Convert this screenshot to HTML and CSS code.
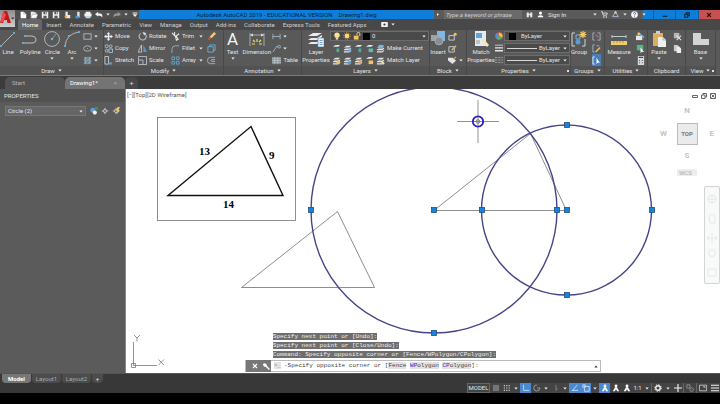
FILE: index.html
```html
<!DOCTYPE html>
<html lang="en">

<head>
    <meta charset="UTF-8">
    <meta name="viewport" content="width=device-width, initial-scale=1.0">
    <title>Autodesk AutoCAD 2019 - Drawing1.dwg</title>
    <link rel="stylesheet" href="styles.css">
</head>

<body>
    <!-- shared icons -->
    <svg class="defs" aria-hidden="true">
        <symbol id="caret" viewBox="0 0 6 4"><path d="M0.5 0.5h5L3 3.6z" fill="#f0f0f0"/></symbol>
        <symbol id="page" viewBox="0 0 10 10"><path d="M2 1h4l3 3v5H2z" fill="#fff"/><path d="M6 1v3h3" fill="none" stroke="#999" stroke-width=".7"/></symbol>
        <symbol id="folder" viewBox="0 0 10 10"><path d="M1 9V1h4l1 1h2v2" fill="#eee"/><path d="M1 9l2-5h7L8 9z" fill="#fff" stroke="#777" stroke-width=".5"/></symbol>
        <symbol id="save" viewBox="0 0 10 10"><path d="M1 1h8v8H1z" fill="#eee"/><path d="M3 1h4v3H3zM3 6h4v3H3z" fill="#555"/><path d="M5 1.5h1v2H5z" fill="#fff"/></symbol>
        <symbol id="layer" viewBox="0 0 10 10"><path d="M1 4l3-2h5L7 4zM1 6l2-1h4l2-1v1L7 7H1zM1 8h6l2-2v1.5L7 9.500H1z" fill="#e4e8ea"/></symbol>
        <symbol id="pick" viewBox="0 0 10 10"><path d="M5 1v8M1 5h8" stroke="#ddd"/><rect x="3.500" y="3.500" width="3" height="3" fill="#666" stroke="#eee" stroke-width=".7"/></symbol>
        <symbol id="person" viewBox="0 0 10 10"><circle cx="5" cy="2.500" r="1.800" fill="#fff"/><path d="M3.800 4h2.400L9 9H6.500L5 6.500 3.500 9H1z" fill="#fff"/></symbol>
    </svg>

    <header class="titlebar">
        <button class="app-button" aria-label="Application menu">
            <svg viewBox="0 0 15 17"><path d="M0 13L3.500 1h3.500l4 12H7.500L6.800 10H4L3 13z" fill="#c4151c"/><path d="M3.500 1L0 13l3-1 3-7z" fill="#f04a4a"/><path d="M11 7.500h3.500l-1.700 2z" fill="#333"/></svg>
        </button>
        <div class="title-row">
            <div class="quick-access">
                <button aria-label="New"><svg><use href="#page"/></svg></button>
                <button aria-label="Open"><svg><use href="#folder"/></svg></button>
                <button aria-label="Save"><svg><use href="#save"/></svg></button>
                <button aria-label="Save as"><svg><use href="#save"/></svg></button>
                <button aria-label="Open from web"><svg viewBox="0 0 10 10"><path d="M3 1h3v4h3v4H3z" fill="#e6e6e6"/><path d="M2 6h3v2H2z" fill="#e7a53a"/></svg></button>
                <button aria-label="Save to web"><svg viewBox="0 0 10 10"><path d="M4 1h3v7H4z" fill="#e6e6e6"/><path d="M2 6h4v3H2z" fill="#4a9be0"/></svg></button>
                <button aria-label="Plot"><svg viewBox="0 0 10 10"><path d="M2 1h6v2h1.500v4H.5V3H2z" fill="#f2f2f2"/><path d="M2 6h6v3H2z" fill="#bcd9ee"/></svg></button>
                <button aria-label="Undo"><svg viewBox="0 0 10 10"><path d="M0 4l4-3v2h3q3 1 2 5-1-2.500-5-2.500V7z" fill="#f2f2f2"/></svg></button>
                <button class="slim" aria-label="Undo list"><svg><use href="#caret"/></svg></button>
                <button aria-label="Redo"><svg viewBox="0 0 10 10"><path d="M10 4L6 1v2H3Q0 4 1 8q1-2.500 5-2.500V7z" fill="#999"/></svg></button>
                <button class="slim" aria-label="Redo list"><svg><use href="#caret"/></svg></button>
                <button aria-label="Customize"><svg viewBox="0 0 10 10"><path d="M2 2h6v1H2zM2 4h6L5 7.500z" fill="#f2f2f2"/></svg></button>
            </div>
            <div class="window-title"><span>Autodesk AutoCAD 2019 - EDUCATIONAL VERSION</span><span>Drawing1.dwg</span></div>
            <div class="info-center">
                <button class="slim" aria-label="Expand search"><svg viewBox="0 0 4 6"><path d="M0 0l4 3-4 3z" fill="#eee"/></svg></button>
                <input type="search" placeholder="Type a keyword or phrase" aria-label="Type a keyword or phrase">
                <button aria-label="Search"><svg viewBox="0 0 10 10"><path d="M1 2h3v2h2V2h3v7H6V6H4v3H1z" fill="#e8e8e8"/></svg></button>
                <button class="sign-in"><svg viewBox="0 0 10 10"><circle cx="5" cy="3" r="2.200" fill="#fff"/><path d="M1 9q0-3 4-3t4 3z" fill="#fff"/></svg>Sign In</button>
                <button class="slim" aria-label="Account list"><svg><use href="#caret"/></svg></button>
                <button aria-label="App store"><svg viewBox="0 0 10 10"><path d="M0 1h2l1 5h5l1-3H3" fill="none" stroke="#e8e8e8" stroke-width="1.200"/><circle cx="4" cy="8.500" r="1" fill="#fff"/><circle cx="7.500" cy="8.500" r="1" fill="#fff"/></svg></button>
                <button aria-label="Stay connected"><svg viewBox="0 0 10 10"><path d="M5 1L1 8h8z" fill="none" stroke="#aebdd8" stroke-width="1.300"/><circle cx="5" cy="2" r="1.500" fill="#ddd"/></svg></button>
                <button class="slim" aria-label="Connect list"><svg><use href="#caret"/></svg></button>
                <button aria-label="Help"><svg viewBox="0 0 10 10"><circle cx="5" cy="5" r="4.800" fill="#f6f6f6"/><path d="M3.500 3.700q.2-1.500 1.600-1.500 1.500 0 1.500 1.300Q6.600 4.500 5 5.400v.8M5 7.200v1" fill="none" stroke="#2452a8" stroke-width="1.200"/></svg></button>
                <button class="slim" aria-label="Help list"><svg><use href="#caret"/></svg></button>
            </div>
            <div class="window-buttons">
                <button aria-label="Minimize"><svg viewBox="0 0 8 8"><path d="M1 5h6v1.500H1z" fill="#102030"/></svg></button>
                <button aria-label="Restore"><svg viewBox="0 0 8 8"><path d="M3 3V1h4v4H5M1 3h4v4H1z" fill="none" stroke="#102030" stroke-width="1.400"/></svg></button>
                <button class="close" aria-label="Close"><svg viewBox="0 0 8 8"><path d="M1.500 1.500l5 5m0-5l-5 5" stroke="#200a0a" stroke-width="1.600"/></svg></button>
            </div>
        </div>
        <nav class="ribbon-tabs">
            <a class="active" href="#home">Home</a>
            <a href="#insert">Insert</a>
            <a href="#annotate">Annotate</a>
            <a href="#parametric">Parametric</a>
            <a href="#view">View</a>
            <a href="#manage">Manage</a>
            <a href="#output">Output</a>
            <a href="#addins">Add-ins</a>
            <a href="#collaborate">Collaborate</a>
            <a href="#express">Express Tools</a>
            <a href="#featured">Featured Apps</a>
            <button class="ribbon-toggle" aria-label="Minimize ribbon"><svg class="cam" viewBox="0 0 8 6"><rect width="8" height="6" rx="1" fill="#f2f2f2"/><circle cx="4" cy="3" r="1.300" fill="#333"/></svg><svg class="caret"><use href="#caret"/></svg></button>
        </nav>
    </header>

    <section class="ribbon" id="home">
        <div class="panel">
            <div class="tools draw">
                <div class="bigs">
                    <button class="big"><svg viewBox="0 0 16 16"><path d="M1 15L14 2" stroke="#c8ccce" stroke-width=".8"/><path d="M0 14h2v2H0zM13 1h2v2h-2z" fill="#6fa6cc"/></svg>Line</button>
                    <button class="big"><svg viewBox="0 0 16 16"><path d="M1 12h10q4-1 3-4-1-3-4-3H3" fill="none" stroke="#c8ccce" stroke-width=".9"/><path d="M0 11h2v2H0zM2 4h2v2H2z" fill="#6fa6cc"/></svg>Polyline</button>
                    <button class="big"><svg viewBox="0 0 16 16"><circle cx="8" cy="8" r="7.400" fill="none" stroke="#c8ccce" stroke-width=".8"/><path d="M8 8l4-5" stroke="#74b6d8" stroke-width=".8"/><circle cx="8" cy="8" r="1.200" fill="#74b6d8"/></svg>Circle<svg class="caret"><use href="#caret"/></svg></button>
                    <button class="big"><svg viewBox="0 0 16 16"><path d="M1 15Q2 3 15 1" fill="none" stroke="#c8ccce" stroke-width=".8"/><path d="M0 14h2v2H0zM4 4h2v2H4zM14 0h2v2h-2z" fill="#6fa6cc"/></svg>Arc<svg class="caret"><use href="#caret"/></svg></button>
                </div>
                <div class="rows">
                    <button class="tool" aria-label="Rectangle"><svg viewBox="0 0 10 10"><rect x="1" y="2" width="8" height="6" fill="none" stroke="#aebcc4"/></svg><svg class="caret"><use href="#caret"/></svg></button>
                    <button class="tool" aria-label="Ellipse"><svg viewBox="0 0 10 10"><ellipse cx="5" cy="5" rx="4.300" ry="3" fill="none" stroke="#aebcc4"/><path d="M4.500 4.500h1v1h-1z" fill="#74b6d8"/></svg><svg class="caret"><use href="#caret"/></svg></button>
                    <button class="tool" aria-label="Hatch"><svg viewBox="0 0 10 10"><path d="M1 1h8v8H1z" fill="#71838e"/><path d="M1 5l4-4M1 9l8-8M5 9l4-4M3 1v8M7 1v8" stroke="#a8c0cc" stroke-width=".6"/></svg><svg class="caret"><use href="#caret"/></svg></button>
                </div>
            </div>
            <button class="panel-title">Draw<svg class="caret"><use href="#caret"/></svg></button>
        </div>

        <div class="panel">
            <div class="tools modify">
                <button class="tool"><svg viewBox="0 0 10 10"><path d="M5 0l2 2.500H5.700v1.800H7.500V3L10 5 7.500 7V5.700H5.700v1.800H7L5 10 3 7.500h1.300V5.700H2.500V7L0 5l2.500-2v1.300h1.800V2.500H3z" fill="#e8ecee"/></svg>Move</button>
                <button class="tool"><svg viewBox="0 0 10 10"><path d="M3 1.500A4 4 0 1 0 8 2" fill="none" stroke="#b4c4cc" stroke-width="1.200"/><path d="M5 0l4 1-2 3z" fill="#dde6ea"/></svg>Rotate</button>
                <button class="tool"><svg viewBox="0 0 10 10"><path d="M1 1l4 4M4 0v4M5 5l4-3M5 5l1 4 2-1-2-3" fill="none" stroke="#e6e6e6" stroke-width="1.200"/></svg>Trim<svg class="caret"><use href="#caret"/></svg></button>
                <button class="tool" aria-label="Erase"><svg viewBox="0 0 10 10"><path d="M1 8l2-3 2 2-3 2z" fill="#d8503c"/><path d="M3 5l5-5 2 2-5 5z" fill="#f0c878"/></svg></button>
                <button class="tool"><svg viewBox="0 0 10 10"><g fill="none" stroke="#a8c4d4"><circle cx="3" cy="2.500" r="1.700"/><circle cx="7.500" cy="2.500" r="1.500"/><circle cx="3" cy="7.500" r="1.500"/><path d="M5.500 5.500h4v4h-4z"/></g></svg>Copy</button>
                <button class="tool"><svg viewBox="0 0 10 10"><path d="M4 1v8H0z" fill="none" stroke="#cfd6da" stroke-width=".9"/><path d="M6 1v8h4z" fill="#5c96c4"/></svg>Mirror</button>
                <button class="tool"><svg viewBox="0 0 10 10"><path d="M1 10V6q0-4 4-4h4" fill="none" stroke="#9fb0b8"/></svg>Fillet<svg class="caret"><use href="#caret"/></svg></button>
                <button class="tool" aria-label="Explode"><svg viewBox="0 0 10 10"><path d="M1 3h6v6H1zM3 3V1h6v6H7" fill="none" stroke="#72aed2"/></svg></button>
                <button class="tool"><svg viewBox="0 0 10 10"><path d="M1 .5h4V9H1z" fill="none" stroke="#c4ccd0"/><path d="M5 7h4v2.500H5z" fill="#5f9ac6"/></svg>Stretch</button>
                <button class="tool"><svg viewBox="0 0 10 10"><path d="M.5.5h9v9h-9zM.5 4.500h5v5" fill="none" stroke="#b8c4ca"/></svg>Scale</button>
                <button class="tool"><svg viewBox="0 0 10 10"><g fill="none" stroke="#5fa6d2"><path d="M1 1h3v3H1zM6 1h3v3H6zM1 6h3v3H1zM6 6h3v3H6z"/></g></svg>Array<svg class="caret"><use href="#caret"/></svg></button>
                <button class="tool" aria-label="Offset"><svg viewBox="0 0 10 10"><path d="M9 1.500H4a3 3 0 0 0 0 7h5M9 4H5.500a1 1 0 0 0 0 2H9" fill="none" stroke="#a4b8c2"/></svg></button>
            </div>
            <button class="panel-title">Modify<svg class="caret"><use href="#caret"/></svg></button>
        </div>

        <div class="panel">
            <div class="tools">
                <button class="big text-big"><span class="glyph">A</span>Text<svg class="caret"><use href="#caret"/></svg></button>
                <button class="big"><svg viewBox="0 0 16 16"><path d="M1 2v13M15 2v13M1 4h14" fill="none" stroke="#b9c0c4" stroke-width=".8"/><path d="M1 4l3-1.500v3zM15 4l-3-1.500v3z" fill="#ddd"/><path d="M8 8v3M4 9l2 2M12 9l-2 2M3 13h3M13 13h-3" stroke="#f0dc50" stroke-width="1.200"/></svg>Dimension</button>
                <div class="rows">
                    <button class="tool" aria-label="Linear"><svg viewBox="0 0 10 10"><path d="M1 2v6M9 2v6M1 5h8" stroke="#9fb6c4"/></svg><svg class="caret"><use href="#caret"/></svg></button>
                    <button class="tool" aria-label="Leader"><svg viewBox="0 0 10 10"><path d="M1 9l4-6h2" fill="none" stroke="#9fb6c4"/><circle cx="8" cy="3" r="1.500" fill="none" stroke="#9fb6c4"/></svg><svg class="caret"><use href="#caret"/></svg></button>
                    <button class="tool"><svg viewBox="0 0 10 10"><path d="M0 1h10v8H0z" fill="#7d8b93"/><path d="M0 3h10M0 5h10M0 7h10M3 1v8M6.500 1v8" stroke="#d4dadd" stroke-width=".6"/></svg>Table</button>
                </div>
            </div>
            <button class="panel-title">Annotation<svg class="caret"><use href="#caret"/></svg></button>
        </div>

        <div class="panel">
            <div class="tools wide-tools">
                <button class="big layer-big"><svg viewBox="0 0 16 16"><path d="M0 5l5-3h9l-5 3zM0 9l3-2h6l5-3v2L9 9zM0 13l3-2h6l5-3v2l-5 3z" fill="#e8ecee"/><path d="M10 7h6v9h-6z" fill="#f4f6f8" stroke="#5a8fc0" stroke-width=".7"/><path d="M11.500 9.500h3M11.500 11.500h3M11.500 13.500h3" stroke="#4a84bc" stroke-width=".8"/></svg>Layer Properties</button>
                <div class="rows layer-rows">
                    <label class="combo layer-combo">
                        <svg viewBox="0 0 10 10"><circle cx="5" cy="4" r="3.300" fill="#fbe38a"/><path d="M3.500 7h3v2.500h-3z" fill="#ddd"/></svg>
                        <svg viewBox="0 0 10 10"><circle cx="5" cy="5" r="3" fill="#fbd86a"/><circle cx="5" cy="5" r="4.200" fill="none" stroke="#eec860" stroke-dasharray="1 1.600"/></svg>
                        <svg viewBox="0 0 10 10"><path d="M1 4.500h6v5H1z" fill="#f2c45c"/><path d="M5 4V2q0-1.500 1.800-1.500T8.500 2v3" fill="none" stroke="#f2d898" stroke-width="1.200"/></svg>
                        <span class="swatch"></span>
                        <select aria-label="Layer"><option>0</option></select>
                        <svg class="caret"><use href="#caret"/></svg>
                    </label>
                    <div class="icon-row">
                        <button class="tool" aria-label="Layer off"><svg viewBox="0 0 10 10"><path d="M1 3l3-2h5L7 3z" fill="#e4e8ea"/><path d="M5 5h3v4H5z" fill="#48b0a0"/></svg></button>
                        <button class="tool" aria-label="Isolate"><svg viewBox="0 0 10 10"><use href="#layer"/><path d="M6 5h3v4H6z" fill="#7cb4e0"/></svg></button>
                        <button class="tool" aria-label="Freeze"><svg viewBox="0 0 10 10"><path d="M1 3l3-2h5L7 3z" fill="#e4e8ea"/><path d="M5 5h3v4H5z" fill="#48b0a0"/></svg></button>
                        <button class="tool" aria-label="Lock"><svg viewBox="0 0 10 10"><path d="M1 3l3-2h5L7 3z" fill="#e4e8ea"/><path d="M4 5h5v4H4z" fill="#58c0a8"/></svg></button>
                        <button class="tool"><svg viewBox="0 0 10 10"><use href="#layer"/><path d="M3 1h5v3H3z" fill="#74b8e4"/></svg>Make Current</button>
                    </div>
                    <div class="icon-row">
                        <button class="tool" aria-label="Turn all on"><svg viewBox="0 0 10 10"><use href="#layer"/><circle cx="7" cy="7" r="2" fill="#f2c85c"/></svg></button>
                        <button class="tool" aria-label="Unisolate"><svg viewBox="0 0 10 10"><use href="#layer"/><path d="M5 6h4v3H5z" fill="#5a9cd8"/></svg></button>
                        <button class="tool" aria-label="Thaw all"><svg viewBox="0 0 10 10"><use href="#layer"/><circle cx="7" cy="7" r="2" fill="#f0a850"/></svg></button>
                        <button class="tool" aria-label="Unlock"><svg viewBox="0 0 10 10"><path d="M1 3l3-2h5L7 3z" fill="#e4e8ea"/><path d="M4 5h5v4H4z" fill="#f2c45c"/></svg></button>
                        <button class="tool"><svg viewBox="0 0 10 10"><use href="#layer"/><path d="M6 6l3 3" stroke="#f2dc8c" stroke-width="2"/></svg>Match Layer</button>
                    </div>
                </div>
            </div>
            <button class="panel-title">Layers<svg class="caret"><use href="#caret"/></svg></button>
        </div>

        <div class="panel">
            <div class="tools">
                <button class="big"><svg viewBox="0 0 16 16"><path d="M7 0h8v10H7z" fill="#7fb8e6"/><path d="M1 4h8v6H1z" fill="#9aa4aa"/><circle cx="9" cy="10" r="4" fill="#868e94" stroke="#b8c0c4" stroke-width=".6"/></svg>Insert</button>
                <div class="rows">
                    <button class="tool" aria-label="Create block"><svg viewBox="0 0 10 10"><path d="M1 4h6v5H1z" fill="none" stroke="#ccd4d8"/><circle cx="8" cy="2.500" r="1.700" fill="#f2c45c"/></svg></button>
                    <button class="tool" aria-label="Edit block"><svg viewBox="0 0 10 10"><path d="M1 3h6v6H1z" fill="none" stroke="#ccd4d8"/><path d="M4 7l5-5" stroke="#e8b860" stroke-width="1.400"/></svg></button>
                    <button class="tool" aria-label="Edit attributes"><svg viewBox="0 0 10 10"><path d="M0 2h5l4 3-4 4-5-4z" fill="#e0e4e6"/><path d="M6 3l3-2" stroke="#ee9a50" stroke-width="1.400"/></svg><svg class="caret"><use href="#caret"/></svg></button>
                </div>
            </div>
            <button class="panel-title">Block<svg class="caret"><use href="#caret"/></svg></button>
        </div>

        <div class="panel">
            <div class="tools wide-tools">
                <button class="big match-big"><svg viewBox="0 0 16 16"><path d="M2 0h11v15H2z" fill="#e4eaee"/><path d="M3 2h6v5H3z" fill="#5ca4dc"/><path d="M3 9h4v4H3z" fill="#b8c4cc"/><path d="M8 9l3-1 5 6-2 2z" fill="#f4e4bc"/></svg>Match Properties</button>
                <div class="rows property-rows">
                    <label class="property"><svg viewBox="0 0 10 10"><circle cx="5" cy="5" r="4.500" fill="#e85a4a"/><path d="M5 5V.5A4.500 4.500 0 0 1 9 7z" fill="#f0c040"/><path d="M5 5l4 2A4.500 4.500 0 0 1 1.500 8z" fill="#4cb468"/><path d="M5 5L1.500 8A4.500 4.500 0 0 1 2 1.500z" fill="#508ce0"/></svg>
                        <span class="combo"><span class="swatch"></span><select aria-label="Object color"><option>ByLayer</option></select><svg class="caret"><use href="#caret"/></svg></span></label>
                    <label class="property"><svg viewBox="0 0 10 10"><path d="M0 1h10v1H0zM0 4h10v1.500H0zM0 7.500h10v2H0z" fill="#e8e8e8"/></svg>
                        <span class="combo"><span class="stroke"></span><select aria-label="Lineweight"><option>ByLayer</option></select><svg class="caret"><use href="#caret"/></svg></span></label>
                    <label class="property"><svg viewBox="0 0 10 10"><path d="M0 2h10M0 5h10M0 8h10" stroke="#a8a8a8" stroke-dasharray="3 1"/></svg>
                        <span class="combo"><span class="stroke"></span><select aria-label="Linetype"><option>ByLayer</option></select><svg class="caret"><use href="#caret"/></svg></span></label>
                </div>
            </div>
            <button class="panel-title launcher">Properties<svg class="caret"><use href="#caret"/></svg></button>
        </div>

        <div class="panel">
            <div class="tools">
                <button class="big"><svg viewBox="0 0 16 16"><path d="M4 2H1v13h3M11 15h3V8" fill="none" stroke="#d0d6da"/><circle cx="7" cy="11" r="2.500" fill="#5a9cd4"/><path d="M5 4h4v4H5z" fill="none" stroke="#78b4e0"/><path d="M12 0v7M8.500 3.500h7M9.500 1l5 5M14.500 1l-5 5" stroke="#f4cc64" stroke-width="1.200"/></svg>Group</button>
                <div class="rows">
                    <button class="tool" aria-label="Ungroup"><svg viewBox="0 0 10 10"><path d="M3 1H1v8h2M6 1h3v8H6" fill="none" stroke="#a0b8c8"/><path d="M4 3l3 3" stroke="#e06858" stroke-width="1.400"/></svg></button>
                    <button class="tool" aria-label="Edit group"><svg viewBox="0 0 10 10"><path d="M3 1H1v8h2M5 2h3" fill="none" stroke="#a0b8c8"/><path d="M4 9l5-5" stroke="#f0c060" stroke-width="1.600"/></svg></button>
                    <button class="tool on" aria-label="Group selection"><svg viewBox="0 0 10 10"><path d="M3 1H1v8h2" fill="none" stroke="#e8f2fa"/><path d="M5 2v7l2-2 2 1z" fill="#fff"/></svg></button>
                </div>
            </div>
            <button class="panel-title">Groups<svg class="caret"><use href="#caret"/></svg></button>
        </div>

        <div class="panel">
            <div class="tools roomy">
                <button class="big"><svg viewBox="0 0 16 16"><path d="M1 5.500h14M1 4v3M15 4v3" stroke="#b8ccd8"/><path d="M0 10h16v4H0z" fill="#f0cc70"/><path d="M3 10v2M6 10v2M9 10v2M12 10v2" stroke="#9a7c30" stroke-width=".7"/></svg>Measure<svg class="caret"><use href="#caret"/></svg></button>
                <div class="rows">
                    <button class="tool" aria-label="Quick select"><svg viewBox="0 0 10 10"><path d="M0 4h7v5H0z" fill="#e4e8ea"/><path d="M3 1l6 5" stroke="#7ab4e0" stroke-width="1.400"/><circle cx="3" cy="2" r="1.500" fill="#f2cc60"/></svg></button>
                    <button class="tool" aria-label="Select all"><svg viewBox="0 0 10 10"><path d="M1 1h7v6H1z" fill="#54b884"/><path d="M5 4v6l1.500-1.500L9 9z" fill="#fff"/></svg></button>
                    <button class="tool" aria-label="Calculator"><svg viewBox="0 0 10 10"><path d="M2 0h7v10H2z" fill="#d8dcde"/><path d="M3 1.500h5M3.500 5h1M6.500 5h1M3.500 7.500h1M6.500 7.500h1" stroke="#444" stroke-width="1.200"/></svg></button>
                </div>
            </div>
            <button class="panel-title">Utilities<svg class="caret"><use href="#caret"/></svg></button>
        </div>

        <div class="panel">
            <div class="tools roomy">
                <button class="big"><svg viewBox="0 0 16 16"><path d="M2 2h10v13H2z" fill="#dcae62"/><path d="M5 0h4v3H5z" fill="#ccd0d2"/><path d="M7 6h5l3 3v7H7z" fill="#f0f0f0"/><path d="M12 6v3h3" fill="none" stroke="#999" stroke-width=".7"/></svg>Paste<svg class="caret"><use href="#caret"/></svg></button>
                <div class="rows">
                    <button class="tool" aria-label="Cut"><svg viewBox="0 0 10 10"><path d="M1 1h6v6H1z" fill="#b4b8ba"/><path d="M4 4l5 5M9 4L4 9" stroke="#e4e4e4" stroke-width="1.200"/></svg></button>
                    <button class="tool" aria-label="Copy clip"><svg viewBox="0 0 10 10"><path d="M1 1h4l2 2v5H1z" fill="#c8ccce"/><path d="M4 3h3l2 2v5H4z" fill="#eee"/></svg></button>
                </div>
            </div>
            <button class="panel-title">Clipboard</button>
        </div>

        <div class="panel">
            <div class="tools roomy">
                <button class="big"><svg viewBox="0 0 16 16"><path d="M0 2h8v6h8v6H0z" fill="#d2d4d6"/></svg>Base<svg class="caret"><use href="#caret"/></svg></button>
            </div>
            <button class="panel-title launcher">View<svg class="caret"><use href="#caret"/></svg></button>
        </div>
    </section>

    <nav class="file-tabs">
        <a href="#start">Start</a>
        <a class="active" href="#drawing1">Drawing1*<span class="x">×</span></a>
        <button aria-label="New drawing">+</button>
    </nav>

    <main class="workspace">
        <aside class="palette">
            <h2>PROPERTIES</h2>
            <div class="palette-row">
                <label class="combo"><select aria-label="Selection"><option>Circle (2)</option></select><svg class="caret"><use href="#caret"/></svg></label>
                <button class="tool" aria-label="Toggle pickadd"><svg viewBox="0 0 10 10"><circle cx="3.500" cy="4" r="3" fill="#5c9ee0"/><circle cx="6" cy="7" r="2.600" fill="#eef2f4"/><path d="M6 0h4v4H6z" fill="#2e9a4c"/></svg></button>
                <button class="tool" aria-label="Select objects"><svg><use href="#pick"/></svg></button>
                <button class="tool" aria-label="Quick select"><svg viewBox="0 0 10 10"><use href="#pick"/><path d="M7 0h3L8 4h2L6 9l1-4H5z" fill="#f2c85c"/></svg></button>
            </div>
        </aside>

        <div class="viewport">
            <svg class="drawing" viewBox="126 89 594 284" preserveAspectRatio="xMinYMin meet">
                <g class="thin">
                    <rect x="157.500" y="117.500" width="138" height="103"/>
                    <path d="M241.500 287.500L337.500 211.500 374.500 287.500z"/>
                    <path d="M434 210.500L530.500 133.500 566.500 210.500z"/>
                </g>
                <path class="sample" d="M168 195.500L251 126.500 283 195.500z"/>
                <g class="dims">
                    <text x="199" y="155">13</text>
                    <text x="269" y="159">9</text>
                    <text x="223" y="208">14</text>
                </g>
                <g class="selected">
                    <circle cx="434" cy="210" r="123"/>
                    <circle cx="566.500" cy="210" r="85"/>
                </g>
                <g class="grips">
                    <rect x="431.500" y="207.500" width="5" height="5"/>
                    <rect x="308.500" y="207.500" width="5" height="5"/>
                    <rect x="554.500" y="207.500" width="5" height="5"/>
                    <rect x="431.500" y="330.500" width="5" height="5"/>
                    <rect x="564.500" y="207.500" width="5" height="5"/>
                    <rect x="479.500" y="207.500" width="5" height="5"/>
                    <rect x="649.500" y="207.500" width="5" height="5"/>
                    <rect x="564.500" y="122.500" width="5" height="5"/>
                    <rect x="564.500" y="292.500" width="5" height="5"/>
                </g>
                <!-- cursor -->
                <path class="cross" d="M457 121.500h42M478 100v43"/>
                <circle class="halo" cx="478" cy="121.500" r="5.200"/>
                <circle class="aperture" cx="478" cy="121.500" r="1.800"/>
                <!-- ucs -->
                <path class="ucs" d="M131.500 363.500h4v4h-4zM133.500 365.500V342M133.500 365.500H157"/>
                <path class="ucs" d="M134 335l3 3 3-3M137 338v3.500M158.500 359.500l5.500 5.500M164 359.500l-5.500 5.500"/>
            </svg>

            <div class="view-controls">[−][Top][2D Wireframe]</div>
            <div class="mdi-buttons">
                <button aria-label="Minimize drawing"><svg viewBox="0 0 6 6"><path d="M.5 2.500h5v2h-5z"/></svg></button>
                <button aria-label="Restore drawing"><svg viewBox="0 0 6 6"><path d="M2 2V.5h3.500V4H4M.5 2H4v3.500H.5z"/></svg></button>
                <button aria-label="Close drawing"><svg viewBox="0 0 6 6"><path d="M.5.500h5v5h-5zM1.500 1.500l3 3m0-3l-3 3"/></svg></button>
            </div>
            <div class="view-cube">
                <span class="n">N</span>
                <span class="w">W</span>
                <button class="top">TOP</button>
                <span class="e">E</span>
                <span class="s">S</span>
                <button class="wcs">WCS</button>
            </div>
            <div class="nav-bar">
                <svg viewBox="0 0 12 96"><g fill="none" stroke="#e6e8ea"><circle cx="6" cy="12" r="4"/><path d="M6 8v8M2 12h8"/><path d="M3 30q0-3 3-3t3 3v6H4zM6 46v10M1 51h10M3 49l-2 2 2 2M9 49l2 2-2 2"/><circle cx="6" cy="66" r="3.500"/><path d="M2 82h8v7H2z"/></g></svg>
            </div>

            <div class="command">
                <ol class="history">
                    <li>Specify next point or [Undo]:</li>
                    <li>Specify next point or [Close/Undo]:</li>
                    <li>Command: Specify opposite corner or [Fence/WPolygon/CPolygon]:</li>
                </ol>
                <div class="command-line">
                    <div class="command-handle">
                        <button aria-label="Close command line"><svg viewBox="0 0 8 8"><path d="M2 2l4 4m0-4L2 6" stroke="#fff" stroke-width="1.200"/></svg></button>
                        <button aria-label="Customize command line"><svg viewBox="0 0 8 8"><path d="M1 2q2-2 4 1v1l3 3-1 1-3-3Q1 5 1 2l2 1z" fill="#fff"/></svg></button>
                    </div>
                    <label for="cmd"><span class="prompt">&gt;_</span>-Specify opposite corner or [<b><i>F</i>ence</b> <b><i>WP</i>olygon</b> <b><i>CP</i>olygon</b>]:</label>
                    <input id="cmd" type="text">
                    <button class="recent" aria-label="Command history"><svg viewBox="0 0 6 4"><path d="M.5 3.500h5L3 .5z" fill="#333"/></svg></button>
                </div>
            </div>
        </div>
    </main>

    <footer class="footer">
        <nav class="layout-tabs">
            <a class="active" href="#model">Model</a>
            <a href="#layout1">Layout1</a>
            <a href="#layout2">Layout2</a>
            <button aria-label="New layout">+</button>
        </nav>
        <div class="status">
            <button class="wide">MODEL</button>
            <button aria-label="Grid"><svg viewBox="0 0 10 10"><path d="M2.500 1v8M5 1v8M7.500 1v8M1 2.500h8M1 5h8M1 7.500h8" stroke="#bbb" stroke-width=".6"/></svg></button>
            <button aria-label="Snap"><svg viewBox="0 0 10 10"><path d="M1 2h8M1 5h8M1 8h8" stroke="#ccc" stroke-width="1.400" stroke-dasharray="1.500 1.500"/></svg></button>
            <button class="slim" aria-label="Snap list"><svg><use href="#caret"/></svg></button>
            <button class="on" aria-label="Ortho"><svg viewBox="0 0 10 10"><path d="M2 1v7h7" fill="none" stroke="#cfe4f8"/></svg></button>
            <button aria-label="Polar"><svg viewBox="0 0 10 10"><path d="M8.500 5A3.800 3.800 0 1 1 5 1.200M5 5h4" fill="none" stroke="#aaa"/></svg></button>
            <button class="slim" aria-label="Polar list"><svg><use href="#caret"/></svg></button>
            <button aria-label="Isometric"><svg viewBox="0 0 10 10"><path d="M5 1v8M5 5l2 2" stroke="#888"/></svg></button>
            <button class="slim" aria-label="Isometric list"><svg><use href="#caret"/></svg></button>
            <button class="on" aria-label="Object snap tracking"><svg viewBox="0 0 10 10"><path d="M1 8h8M2 8l6-7" stroke="#d8eafa"/></svg></button>
            <button class="on" aria-label="Object snap"><svg viewBox="0 0 10 10"><path d="M3 3h6v6H3zM1 1h3v3H1z" fill="none" stroke="#d8eafa"/></svg></button>
            <button class="slim" aria-label="Object snap list"><svg><use href="#caret"/></svg></button>
            <button class="on" aria-label="Annotation visibility"><svg><use href="#person"/></svg></button>
            <button aria-label="Auto scale"><svg><use href="#person"/></svg></button>
            <button aria-label="Annotation scale"><svg><use href="#person"/></svg></button>
            <button>1:1</button>
            <button class="slim" aria-label="Scale list"><svg><use href="#caret"/></svg></button>
            <button class="sep" aria-label="Workspace"><svg viewBox="0 0 10 10"><circle cx="5" cy="5" r="2.800" fill="none" stroke="#f0f0f0" stroke-width="1.800"/><circle cx="5" cy="5" r="4.200" fill="none" stroke="#f0f0f0" stroke-width="1.200" stroke-dasharray="1.600 1.700"/></svg></button>
            <button class="slim" aria-label="Workspace list"><svg><use href="#caret"/></svg></button>
            <button aria-label="Annotation monitor"><svg viewBox="0 0 10 10"><path d="M5 0v10M0 5h10" stroke="#f4f4f4" stroke-width="1.400"/></svg></button>
            <button class="sep" aria-label="Isolate objects"><svg viewBox="0 0 10 10"><path d="M1 1h4v4H1z" fill="none" stroke="#999"/><circle cx="7" cy="7" r="2.200" fill="none" stroke="#999"/></svg></button>
            <button class="sep" aria-label="Clean screen"><svg viewBox="0 0 10 10"><path d="M.5 1.500h9v7h-9zM5 3.500h2.500V5" fill="none" stroke="#d4d4d4"/></svg></button>
            <button aria-label="Customization"><svg viewBox="0 0 10 10"><path d="M0 1.500h10M0 5h10M0 8.500h10" stroke="#f4f4f4" stroke-width="1.400"/></svg></button>
        </div>
    </footer>
</body>

</html>
```
FILE: styles.css
```css
* {
    box-sizing: border-box;
}

body {
    margin: 0;
    height: 100vh;
    padding: 10px 0 11px;
    display: flex;
    flex-direction: column;
    overflow: hidden;
    background: #000;
    color: #e4e4e4;
    font: 6px/8px Roboto, "Liberation Sans", sans-serif;
}

button,
input,
select {
    margin: 0;
    padding: 0;
    border: 0;
    background: none;
    color: inherit;
    font: inherit;
    outline: none;
    appearance: none;
}

a {
    color: inherit;
    text-decoration: none;
}

button svg,
label svg {
    display: block;
    flex: none;
    width: 9px;
    height: 9px;
}

.defs {
    position: absolute;
    width: 0;
    height: 0;
}

button .caret,
label .caret,
.slim svg {
    width: 4px;
    height: 3px;
}

/* title bar */
.titlebar {
    flex: none;
    display: grid;
    grid-template: 9px 11px / 15px 1fr;
    background: #484848;
}

.app-button {
    grid-row: span 2;
    height: 17px;
    background: linear-gradient(#8c8c8c, #cfcfcf);
}

.app-button svg {
    width: 15px;
    height: 17px;
}

.title-row {
    display: flex;
    background: #0e7ed8;
}

.quick-access {
    width: 124px;
    padding: 0 0 0 4px;
    display: flex;
    align-items: center;
    justify-content: space-between;
    background: #505050;
}

.quick-access button,
.info-center button {
    flex: none;
    height: 9px;
    display: flex;
    align-items: center;
    justify-content: center;
}

.quick-access svg {
    width: 8px;
    height: 8px;
}

.quick-access .slim svg,
.info-center .slim svg {
    width: 4px;
    height: 3px;
}

.window-title {
    flex: 1;
    display: flex;
    justify-content: center;
    gap: 6px;
    color: #0a2140;
    line-height: 10px;
    white-space: nowrap;
}

.info-center {
    width: 209px;
    padding: 0 2px;
    display: flex;
    align-items: center;
    gap: 4px;
    background: #5a5a5a;
}

.info-center svg {
    width: 7px;
    height: 7px;
}

.info-center input {
    width: 84px;
    height: 9px;
    padding-left: 2px;
    background: #6a6a6a;
    font-style: italic;
}

.info-center input::placeholder {
    color: #d0d0d0;
}

.info-center .sign-in {
    width: 52px;
    justify-content: flex-start;
    gap: 4px;
}

.window-buttons {
    width: 77px;
    padding-left: 10px;
    display: flex;
}

.window-buttons button {
    flex: 1;
    display: flex;
    align-items: center;
    justify-content: center;
    border-left: 1px solid #0b5ea6;
}

.window-buttons svg {
    width: 6px;
    height: 6px;
}

.window-buttons .close {
    background: #c75050;
}

.ribbon-tabs {
    padding-left: 3px;
    display: flex;
    line-height: 11px;
    color: #d0d0d0;
    white-space: nowrap;
}

.ribbon-tabs a {
    padding: 0 4px;
}

.ribbon-tabs .active {
    background: #666;
    color: #fff;
    border-radius: 2px 2px 0 0;
}

.ribbon-toggle {
    margin-left: 10px;
    display: flex;
    align-items: center;
    gap: 3px;
}

.ribbon-toggle .cam {
    width: 7px;
    height: 5px;
}

/* ribbon */
.ribbon {
    flex: none;
    display: grid;
    grid-template-columns: 104fr 120fr 78fr 128fr 37fr 104fr 34fr 43fr 38fr 30fr 4fr;
    background: #595959;
    border-bottom: 1px solid #7a7a7a;
}

.panel {
    min-width: 0;
    display: flex;
    flex-direction: column;
    border-right: 1px solid #484848;
}

.tools {
    height: 36px;
    padding-right: 3px;
    display: flex;
    justify-content: space-between;
}

.wide-tools {
    padding-right: 0;
}

.roomy {
    padding-right: 0;
    justify-content: space-around;
}

.draw {
    padding-right: 5px;
    gap: 3px;
}

.panel-title {
    height: 9px;
    display: flex;
    align-items: center;
    justify-content: center;
    gap: 3px;
    background: #525252;
    white-space: nowrap;
}

.launcher {
    position: relative;
}

.launcher::after {
    content: "";
    position: absolute;
    right: 1px;
    width: 2px;
    height: 2px;
    background: #ddd;
}

.bigs {
    flex: 1;
    display: flex;
    justify-content: space-between;
}

.big {
    min-width: 16px;
    padding-top: 1px;
    display: flex;
    flex-direction: column;
    align-items: center;
    line-height: 8px;
}

.big > svg:first-child {
    width: 16px;
    height: 16px;
    margin-bottom: 1px;
}

.big .caret {
    margin-top: 1px;
}

.text-big {
    width: 17px;
}

.glyph {
    height: 17px;
    color: #f4f4f4;
    font-size: 17px;
    line-height: 17px;
}

.rows {
    flex: none;
    display: grid;
    grid-template-rows: repeat(3, 12px);
}

.tool {
    display: flex;
    align-items: center;
    gap: 2px;
    white-space: nowrap;
}

.tool.on {
    background: #4a80b8;
}

.modify {
    display: grid;
    grid-template: repeat(3, 12px) / 34px 33px 36px 1fr;
}

.modify .caret {
    margin-left: auto;
    margin-right: 4px;
}

.layer-big {
    width: 28px;
}

.match-big {
    width: 29px;
}

.layer-rows {
    flex: 1;
}

.icon-row {
    padding-left: 2px;
    display: flex;
    gap: 2px;
}

.combo {
    height: 10px;
    padding: 0 2px;
    display: flex;
    align-items: center;
    gap: 2px;
    background: #4a4a4a;
    border: 1px solid #6c6c6c;
}

.combo select {
    flex: 1;
    min-width: 0;
    height: 8px;
    line-height: 8px;
}

.combo svg:not(.caret) {
    width: 8px;
    height: 8px;
}

.layer-combo {
    margin-top: 1px;
}

.swatch {
    width: 7px;
    height: 7px;
    background: #000;
}

.property-rows {
    flex: 1;
}

.property {
    display: flex;
    align-items: center;
    gap: 1px;
}

.property svg:not(.caret) {
    width: 8px;
    height: 8px;
}

.property .combo {
    flex: 1;
    min-width: 0;
}

.property .swatch {
    margin: 0 3px 0 2px;
}

.stroke {
    width: 30px;
    height: 1px;
    background: #d8d8d8;
}

/* file tabs */
.file-tabs {
    flex: none;
    height: 13px;
    padding: 1px 0 0 5px;
    display: flex;
    background: #3b3b3b;
    line-height: 11px;
}

.file-tabs a {
    width: 60px;
    padding: 0 8px 0 7px;
    display: flex;
    justify-content: space-between;
    background: #525252;
    border-radius: 5px 5px 0 0;
    color: #b8b8b8;
}

.file-tabs .active {
    padding-left: 5px;
    background: #747474;
    color: #fff;
}

.file-tabs .x {
    color: #aaa;
}

.file-tabs button {
    width: 13px;
    background: #484848;
    border-radius: 5px 5px 0 0;
    color: #ccc;
    font-size: 8px;
}

/* workspace */
.workspace {
    flex: 1;
    min-height: 0;
    display: flex;
}

.palette {
    width: 126px;
    background: #5b5b5b;
    border-right: 1px solid #888;
}

.palette h2 {
    margin: 0;
    padding: 0 4px;
    height: 13px;
    background: #525252;
    font-size: 6px;
    font-weight: 400;
    line-height: 13px;
}

.palette-row {
    padding: 4px 5px;
    display: flex;
    align-items: center;
    gap: 3px;
}

.palette-row .combo {
    width: 81px;
    margin-right: 1px;
    background: #666;
    border-color: #777;
}

.palette-row svg:not(.caret) {
    width: 8px;
    height: 8px;
}

.viewport {
    position: relative;
    flex: 1;
    min-width: 0;
    background: #fff;
    color: #555;
}

.drawing {
    display: block;
    width: 100%;
    height: 100%;
}

.thin {
    fill: none;
    stroke: #707070;
    stroke-width: 0.8;
}

.sample {
    fill: none;
    stroke: #111;
    stroke-width: 1.4;
}

.dims {
    fill: #000;
    font: bold 11px "Liberation Serif", serif;
}

.selected {
    fill: none;
    stroke: #45458a;
    stroke-width: 1.4;
}

.grips {
    fill: #1583e0;
    stroke: #24507c;
    stroke-width: 0.8;
}

.cross,
.ucs {
    fill: none;
    stroke: #777;
    stroke-width: 0.8;
}

.halo {
    fill: none;
    stroke: #2c1fc4;
    stroke-width: 1.8;
}

.aperture {
    fill: none;
    stroke: #666;
    stroke-width: 0.8;
}

.view-controls {
    position: absolute;
    top: 2px;
    left: 1px;
}

.mdi-buttons {
    position: absolute;
    top: 4px;
    right: 4px;
    display: flex;
    gap: 3px;
}

.mdi-buttons svg {
    width: 6px;
    height: 6px;
    fill: none;
    stroke: #555;
    stroke-width: 0.9;
}

.view-cube {
    position: absolute;
    top: 18px;
    right: 6px;
    display: grid;
    grid-template: 16px 22px 22px 10px / 16px 22px 16px;
    grid-template-areas: ". n ." "w top e" ". s ." ". wcs .";
    place-items: center;
    color: #c4c4c4;
    font-size: 8px;
    font-weight: 700;
}

.view-cube .n { grid-area: n; align-self: start; }
.view-cube .w { grid-area: w; justify-self: start; }
.view-cube .e { grid-area: e; justify-self: end; }
.view-cube .s { grid-area: s; }

.view-cube .top {
    grid-area: top;
    width: 21px;
    height: 22px;
    background: #ebebeb;
    border: 1px solid #bbb;
    color: #777;
    font-size: 6px;
}

.view-cube .wcs {
    grid-area: wcs;
    width: 20px;
    height: 7px;
    padding-left: 2px;
    background: #ececf2;
    color: #aaa;
    font-size: 6px;
    font-weight: 400;
    line-height: 7px;
    text-align: left;
}

.nav-bar {
    position: absolute;
    top: 97px;
    right: 0;
    width: 16px;
    border: 1px solid #d4d4d4;
    border-radius: 2px;
    background: #f8f9f9;
}

.nav-bar svg {
    display: block;
    width: 12px;
    height: 96px;
    margin: 0 1px;
}

/* command line */
.command {
    position: absolute;
    left: 20%;
    right: 20%;
    bottom: 1px;
    font-family: "Liberation Mono", monospace;
}

.history {
    margin: 0 0 2px;
    padding: 0 0 0 28px;
    list-style: none;
    display: flex;
    flex-direction: column;
    align-items: flex-start;
    gap: 2px;
    color: #f0f0f0;
    white-space: nowrap;
}

.history li {
    height: 7px;
    background: #6e6e6e;
    line-height: 7px;
}

.command-line {
    height: 12px;
    display: flex;
    align-items: center;
    background: #fff;
    border: 1px solid #bbb;
    color: #444;
    white-space: nowrap;
}

.command-handle {
    width: 25px;
    height: 12px;
    padding-left: 5px;
    display: flex;
    align-items: center;
    gap: 3px;
    background: #777;
}

.command-handle svg {
    width: 8px;
    height: 8px;
}

.command-line label {
    padding-left: 3px;
}

.command-line b {
    background: #e2e2e2;
    font-weight: 400;
}

.command-line i {
    color: #2a2acc;
    font-style: normal;
}

.prompt {
    margin-right: 3px;
    background: #e4e4e4;
    color: #888;
}

.command-line input {
    flex: 1;
    min-width: 0;
}

.recent {
    padding-right: 2px;
}

.recent svg {
    width: 4px;
    height: 3px;
}

/* footer */
.footer {
    flex: none;
    height: 20px;
    display: flex;
    justify-content: space-between;
    background: #383838;
    border-top: 1px solid #555;
}

.layout-tabs {
    height: 9px;
    padding-left: 2px;
    display: flex;
    gap: 1px;
    line-height: 9px;
}

.layout-tabs a {
    width: 29px;
    background: #4c4c4c;
    border-radius: 0 0 4px 4px;
    color: #aaa;
    text-align: center;
}

.layout-tabs .active {
    background: #777;
    color: #fff;
    font-weight: 700;
}

.layout-tabs button {
    width: 11px;
    background: #4c4c4c;
    border-radius: 0 0 4px 4px;
}

.status {
    align-self: flex-end;
    height: 10px;
    display: flex;
    background: #444;
}

.status button {
    width: 11px;
    display: flex;
    align-items: center;
    justify-content: center;
}

.status svg {
    width: 8px;
    height: 8px;
}

.status .slim {
    width: 8px;
}

.status .slim svg {
    width: 4px;
    height: 3px;
}

.status .wide {
    width: 23px;
    border: 1px solid #666;
}

.status .on {
    background: #4b8ad0;
}

.status .sep {
    width: 13px;
    border-left: 1px solid #666;
}
```
